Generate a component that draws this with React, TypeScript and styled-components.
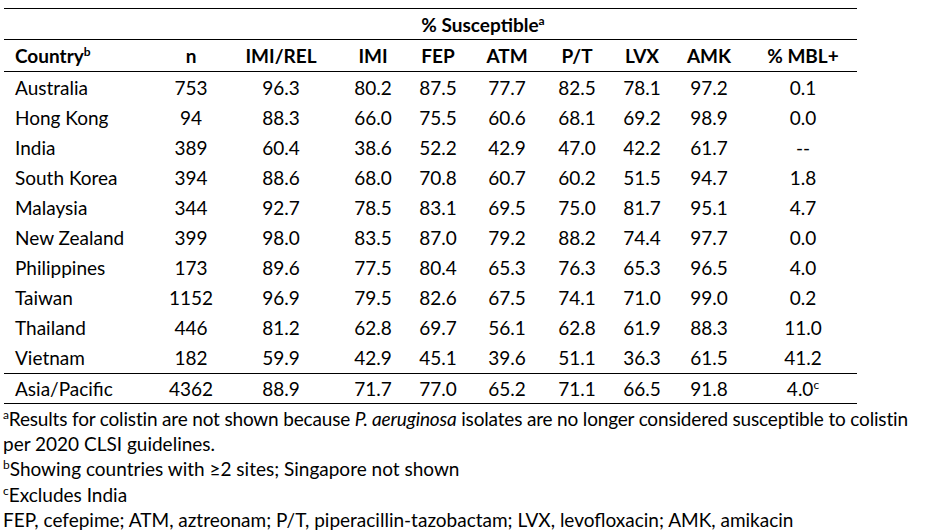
import React from "react";
import styled, { createGlobalStyle } from "styled-components";

const Global = createGlobalStyle`
  html, body { margin: 0; padding: 0; background: #fff; }
  body { font-family: Lato, "Open Sans", "Liberation Sans", sans-serif; color: #000; }
`;

const Page = styled.div`
  padding: 8px 0 0 4px;
  width: 923px;
`;

const COLS = "161px 52px 128px 56px 74px 64px 76px 54px 80px 108px";

const Table = styled.div`
  width: 853px;
  border-top: 1.5px solid #000;
`;

const Row = styled.div<{ $h: number; $line?: boolean }>`
  display: grid;
  grid-template-columns: ${COLS};
  height: ${(p) => p.$h}px;
  align-items: center;
  border-bottom: ${(p) => (p.$line ? "1.5px solid #000" : "none")};
  font-size: 19px;
`;

const Cell = styled.div<{ $bold?: boolean; $left?: boolean }>`
  text-align: ${(p) => (p.$left ? "left" : "center")};
  padding-left: ${(p) => (p.$left ? "11px" : "0")};
  font-weight: ${(p) => (p.$bold ? 700 : 400)};
  white-space: nowrap;
`;

const SpanCell = styled(Cell)`
  grid-column: 3 / 10;
`;

const Sup = styled.sup`
  font-size: 12px;
  line-height: 0;
  vertical-align: 0.55em;
  font-weight: inherit;
`;

const Notes = styled.div`
  padding-top: 2px;
  margin-left: -1px;
  font-size: 19px;
  line-height: 25.2px;
`;

const Note = styled.div<{ $tight?: boolean }>`
  white-space: nowrap;
  letter-spacing: ${(p) => (p.$tight ? "-0.17px" : "0")};
`;

type R = [string, string, string, string, string, string, string, string, string, string];

const rows: R[] = [
  ["Australia", "753", "96.3", "80.2", "87.5", "77.7", "82.5", "78.1", "97.2", "0.1"],
  ["Hong Kong", "94", "88.3", "66.0", "75.5", "60.6", "68.1", "69.2", "98.9", "0.0"],
  ["India", "389", "60.4", "38.6", "52.2", "42.9", "47.0", "42.2", "61.7", "--"],
  ["South Korea", "394", "88.6", "68.0", "70.8", "60.7", "60.2", "51.5", "94.7", "1.8"],
  ["Malaysia", "344", "92.7", "78.5", "83.1", "69.5", "75.0", "81.7", "95.1", "4.7"],
  ["New Zealand", "399", "98.0", "83.5", "87.0", "79.2", "88.2", "74.4", "97.7", "0.0"],
  ["Philippines", "173", "89.6", "77.5", "80.4", "65.3", "76.3", "65.3", "96.5", "4.0"],
  ["Taiwan", "1152", "96.9", "79.5", "82.6", "67.5", "74.1", "71.0", "99.0", "0.2"],
  ["Thailand", "446", "81.2", "62.8", "69.7", "56.1", "62.8", "61.9", "88.3", "11.0"],
  ["Vietnam", "182", "59.9", "42.9", "45.1", "39.6", "51.1", "36.3", "61.5", "41.2"],
];

const heads = ["n", "IMI/REL", "IMI", "FEP", "ATM", "P/T", "LVX", "AMK", "% MBL+"];

export default function App() {
  return (
    <Page>
      <Global />
      <Table>
        <Row $h={30} $line>
          <SpanCell $bold>
            % Susceptible<Sup>a</Sup>
          </SpanCell>
        </Row>
        <Row $h={31} $line>
          <Cell $bold $left>
            Country<Sup>b</Sup>
          </Cell>
          {heads.map((h) => (
            <Cell key={h} $bold>
              {h}
            </Cell>
          ))}
        </Row>
        {rows.map((r, i) => (
          <Row key={r[0]} $h={i === rows.length - 1 ? 31 : 30} $line={i === rows.length - 1}>
            {r.map((v, j) => (
              <Cell key={j} $left={j === 0}>
                {v}
              </Cell>
            ))}
          </Row>
        ))}
        <Row $h={29} $line>
          <Cell $left>Asia/Pacific</Cell>
          <Cell>4362</Cell>
          <Cell>88.9</Cell>
          <Cell>71.7</Cell>
          <Cell>77.0</Cell>
          <Cell>65.2</Cell>
          <Cell>71.1</Cell>
          <Cell>66.5</Cell>
          <Cell>91.8</Cell>
          <Cell>
            4.0<Sup>c</Sup>
          </Cell>
        </Row>
      </Table>
      <Notes>
        <Note $tight>
          <Sup>a</Sup>Results for colistin are not shown because <i>P. aeruginosa</i> isolates are no longer
          considered susceptible to colistin
        </Note>
        <Note>per 2020 CLSI guidelines.</Note>
        <Note>
          <Sup>b</Sup>Showing countries with ≥2 sites; Singapore not shown
        </Note>
        <Note>
          <Sup>c</Sup>Excludes India
        </Note>
        <Note>FEP, cefepime; ATM, aztreonam; P/T, piperacillin-tazobactam; LVX, levofloxacin; AMK, amikacin</Note>
      </Notes>
    </Page>
  );
}
